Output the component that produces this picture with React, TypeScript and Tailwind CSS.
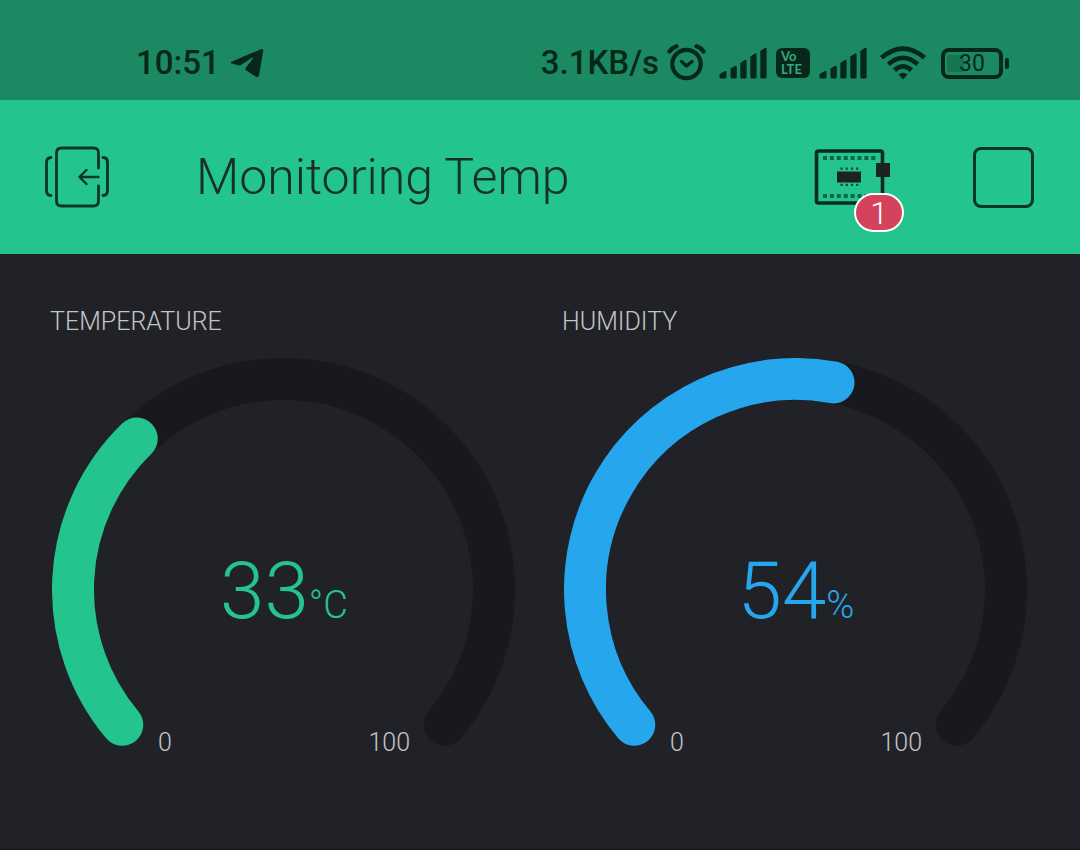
import React from 'react';

const START = 140;
const SWEEP = 260;
const RADIUS = 210.5;
const CX = 231.5;
const CY = 231.5;

function point(deg: number) {
  const a = (deg * Math.PI) / 180;
  return `${(CX + RADIUS * Math.cos(a)).toFixed(2)} ${(CY + RADIUS * Math.sin(a)).toFixed(2)}`;
}

function arc(fraction: number) {
  const sweep = SWEEP * fraction;
  return `M${point(START)}A${RADIUS} ${RADIUS} 0 ${sweep > 180 ? 1 : 0} 1 ${point(START + sweep)}`;
}

type GaugeProps = { label: string; value: number; unit: string; color: string };

function Gauge({ label, value, unit, color }: GaugeProps) {
  return (
    <section className="min-w-0">
      <h2 className="pl-[22px] text-[25px] leading-8 font-light text-[#c4c5c9]">{label}</h2>
      <div className="px-6 pt-5">
        <svg
          viewBox="0 0 464 400"
          className="block w-full font-light"
          role="img"
          aria-label={`${label} ${value}${unit}`}
        >
          <g fill="none" strokeWidth="42" strokeLinecap="round">
            <path d={arc(1)} stroke="#18191c" />
            <path d={arc(value / 100)} stroke={color} />
          </g>
          <text x="232" y="260" textAnchor="middle" fill={color} fontSize="80">
            {value}
            <tspan fontSize="38">{unit}</tspan>
          </text>
          <g fill="#c4c5c9" fontSize="25">
            <text x="113" y="393" textAnchor="middle">0</text>
            <text x="358" y="393" textAnchor="end">100</text>
          </g>
        </svg>
      </div>
    </section>
  );
}

function Signal() {
  return (
    <svg viewBox="0 0 48 32" className="h-8 w-12" fill="currentColor" aria-hidden="true">
      <path d="M0.500 30v-2q0-1 1-1.600l4.500-2.400q1.500-.5 1.500 1v5q0 1.500-1.500 1.500H2q-1.500 0-1.500-1.500z" />
      <path d="M11.500 21.500l4.500-2.500q1.800-.6 1.800 1v10q0 1.500-1.500 1.500H13q-1.500 0-1.500-1.500z" />
      <path d="M21.300 16l4.500-3q1.800-.6 1.800 1v16q0 1.500-1.500 1.500h-3.300q-1.500 0-1.500-1.500z" />
      <path d="M31.300 9.500l4.500-3q1.800-.6 1.800 1V30q0 1.500-1.500 1.500h-3.300q-1.500 0-1.500-1.500z" />
      <path d="M41.300 4l4.500-3q1.800-.6 1.800 1v28q0 1.500-1.500 1.500h-3.300q-1.500 0-1.500-1.500z" />
    </svg>
  );
}

function StatusBar() {
  return (
    <div className="flex h-[100px] items-center bg-[#1b8a63] pt-[26px] pr-[70px] pl-[136px] text-[33px] leading-10 font-medium text-[#05281b]">
      <span>10:51</span>
      <svg viewBox="0 0 34 30" className="ml-[10px] h-[30px] w-[34px]" fill="currentColor" aria-hidden="true">
        <path d="M1.500 13.800L31 1.200Q33.500.500 33.200 3L29 27.500Q28.300 30 26 28.800L16 22.300Q14.500 21 16 19.500L23 10.200Q23.500 9 22 9.800L11 17Q9.500 17.800 8 17.300L1.300 15.300Q0 14.500 1.500 13.800z" />
      </svg>
      <span className="ml-auto">3.1KB/s</span>
      <svg viewBox="0 0 40 38" className="ml-2 h-[38px] w-10" fill="none" stroke="currentColor" strokeWidth="4.200" strokeLinecap="round" strokeLinejoin="round" aria-hidden="true">
        <circle cx="19.500" cy="20" r="14.200" />
        <path d="M2.500 7.500Q5 3.800 9.500 2.300M36.500 7.500Q34 3.800 29.500 2.300" />
        <path d="M14.500 17.500l5 4.500 5.500-4.500" strokeWidth="3.400" />
      </svg>
      <span className="ml-3"><Signal /></span>
      <span className="ml-[9px] flex h-[30px] w-[34px] flex-col justify-center rounded-md bg-[#05281b] pl-[5px] font-[Lato,sans-serif] text-[13px] leading-[13px] font-bold text-[#3aa57f]">
        <span>Vo</span>
        <span>LTE</span>
      </span>
      <span className="ml-[9px]"><Signal /></span>
      <svg viewBox="0 0 46 34" className="ml-[13px] h-[34px] w-[46px]" fill="none" stroke="currentColor" strokeWidth="4.600" aria-hidden="true">
        <path d="M1.500 11.800Q23-6.500 44.500 11.800" />
        <path d="M8.300 18.300Q23 5.500 37.700 18.300" />
        <path d="M14.500 24.300Q23 16.500 31.500 24.300" />
        <path d="M18.500 28.600Q23 25 27.500 28.600L23 33.500z" fill="currentColor" stroke="none" />
      </svg>
      <span className="relative ml-[15px] flex h-[31px] w-[69px] items-center">
        <svg viewBox="0 0 69 31" className="h-[31px] w-[69px]" aria-hidden="true">
          <rect x="6" y="7" width="17" height="17" rx="2" fill="#137650" />
          <rect x="2" y="2" width="58" height="27" rx="6" fill="none" stroke="currentColor" strokeWidth="4" />
          <rect x="64" y="10" width="4" height="11" rx="2" fill="currentColor" />
        </svg>
        <span className="absolute inset-y-0 left-0 w-[62px] text-center text-[23px] leading-8 font-normal">30</span>
      </span>
    </div>
  );
}

const PINS = [0, 1, 2, 3, 4, 5, 6, 7];

function Header() {
  return (
    <header className="flex h-[154px] items-center bg-[#24c48e] px-[46px] text-[#0b3526]">
      <button type="button" aria-label="Exit project" className="h-16 w-16">
        <svg viewBox="1 0 64 64" className="h-16 w-16 overflow-visible" fill="none" stroke="currentColor" strokeWidth="2.800" strokeLinecap="round" strokeLinejoin="round">
          <path d="M53.500 23V8q0-5-5-5H16.500q-5 0-5 5v48q0 5 5 5h32q5 0 5-5V41" />
          <path d="M6 12.500q-4.500 0-4.500 5v28q0 5 4.500 5M58 12.500q4.500 0 4.500 5v28q0 5-4.500 5" />
          <path d="M53.500 32H34.500M41.500 25l-7 7 7 7" strokeWidth="2.400" />
        </svg>
      </button>
      <h1 className="ml-[86px] text-[50px] leading-[64px] font-light text-[#15302a]">Monitoring Temp</h1>
      <button type="button" aria-label="Devices, 1 notification" className="relative ml-auto h-14 w-[76px]">
        <svg viewBox="0 0 76 56" className="h-14 w-[76px]">
          <rect x="2.500" y="2" width="66" height="52" rx="2" fill="none" stroke="#0b2b22" strokeWidth="3.600" />
          <rect x="62" y="14" width="14" height="14" fill="#1d2225" />
          <rect x="23" y="22.500" width="24" height="11" fill="#1d2225" />
          {PINS.map((i) => (
            <g key={i} fill="#0b6648">
              <rect x={9 + i * 6.9} y="7" width="4" height="4" />
              <rect x={9 + i * 6.9} y="45" width="4" height="4" />
            </g>
          ))}
          {PINS.slice(0, 4).map((i) => (
            <g key={i} fill="#0b4a36">
              <rect x={26.500 + i * 5.2} y="18.500" width="2.200" height="2.200" />
              <rect x={26.500 + i * 5.2} y="34.800" width="2.200" height="2.200" />
            </g>
          ))}
        </svg>
        <span className="absolute top-11 left-10 flex h-[39px] w-[50px] items-center justify-center rounded-full border-2 border-white bg-[#d4425c] text-[32px] leading-8 font-light text-white">
          1
        </span>
      </button>
      <button type="button" aria-label="Stop" className="ml-[83px] h-[61px] w-[61px] rounded-lg border-[3px] border-[#0b3526]" />
    </header>
  );
}

export default function App() {
  return (
    <div className="flex min-h-screen flex-col bg-[#212227] font-[Roboto,sans-serif]">
      <StatusBar />
      <Header />
      <main className="grid flex-1 grid-cols-2 border-b-2 border-[#1b1b20] px-7 pt-[52px]">
        <Gauge label="TEMPERATURE" value={33} unit="°C" color="#24c48e" />
        <Gauge label="HUMIDITY" value={54} unit="%" color="#26a6ec" />
      </main>
    </div>
  );
}
